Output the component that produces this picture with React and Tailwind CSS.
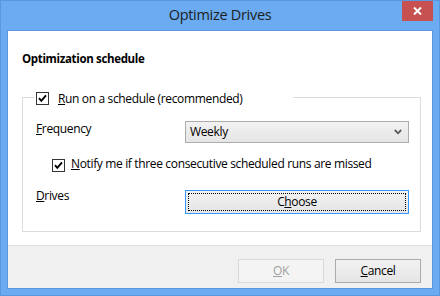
export default function App() {
  const Check = () => (
    <div className="w-[13px] h-[13px] border border-[#333333] bg-white flex items-center justify-center shrink-0">
      <svg width="11" height="11" viewBox="0 0 11 11">
        <path d="M2 5.2 L4.3 7.8 L9 2.4" fill="none" stroke="#000" strokeWidth="1.9" />
      </svg>
    </div>
  );
  return (
    <div className="w-[440px] h-[296px] bg-[#6aabf2] border border-[#5a97df] flex flex-col px-[6px] pb-[6px] font-['Open_Sans',sans-serif] text-[12px] leading-[16px] text-black tracking-[-0.35px]">
      <div className="relative h-[29px] shrink-0 flex items-center justify-center">
        <span className="text-[14.5px] leading-[20px] text-[#1e1e1e] tracking-[-0.3px] -mt-[1px]">Optimize Drives</span>
        <div className="absolute top-0 right-0 w-[31px] h-[20px] bg-[#c75050] flex items-center justify-center">
          <svg width="9" height="8" viewBox="0 0 9 8">
            <path d="M1 0.5 L8 7.5 M8 0.5 L1 7.5" stroke="#fff" strokeWidth="2" fill="none" />
          </svg>
        </div>
      </div>
      <div className="flex-1 border border-[#5a97df] bg-white flex flex-col">
        <div className="flex-1 pl-[14px] pr-[11px] pt-[20px] flex flex-col">
          <div className="font-bold text-[11.5px] tracking-[-0.34px]">Optimization schedule</div>
          <div className="mt-[30px] border border-[#dcdcdc] pl-[13px] pr-[11px] pb-[17px] flex flex-col">
            <div className="-mt-[6px] -ml-[1px] pl-[1px] bg-white w-[258px] h-[13px] flex items-center">
              <Check />
              <span className="ml-[9px]"><u>R</u>un on a schedule (recommended)</span>
            </div>
            <div className="mt-[16px] flex items-start">
              <div className="w-[149px]"><u>F</u>requency</div>
              <div className="w-[224px] h-[22px] border border-[#acacac] bg-gradient-to-b from-[#f2f2f2] to-[#e5e5e5] flex items-center justify-between pl-[4px] pr-[6px]">
                <span>Weekly</span>
                <svg width="8" height="6" viewBox="0 0 8 6">
                  <path d="M0.8 1 L4 4.3 L7.2 1" fill="none" stroke="#5a5a5a" strokeWidth="1.8" />
                </svg>
              </div>
            </div>
            <div className="mt-[13px] pl-[16px] flex items-start">
              <div className="mt-[3px]"><Check /></div>
              <span className="ml-[6px]"><u>N</u>otify me if three consecutive scheduled runs are missed</span>
            </div>
            <div className="mt-[16px] flex items-start">
              <div className="w-[149px]"><u>D</u>rives</div>
              <div className="mt-[2px] w-[224px] h-[24px] border border-[#3399ff] bg-gradient-to-b from-[#f2f2f2] to-[#e5e5e5] p-[2px]">
                <div className="w-full h-full border border-dotted border-black flex items-center justify-center">
                  <span>C<u>h</u>oose</span>
                </div>
              </div>
            </div>
          </div>
        </div>
        <div className="h-[43px] shrink-0 border-t border-[#dfdfdf] bg-[#f0f0f0] flex justify-end items-start pt-[13px] pr-[11px] gap-[11px]">
          <div className="w-[86px] h-[24px] border border-[#d9d9d9] bg-[#f4f4f4] text-[#a0a0a0] flex items-center justify-center">
            <span><u>O</u>K</span>
          </div>
          <div className="w-[86px] h-[24px] border border-[#acacac] bg-gradient-to-b from-[#f2f2f2] to-[#e5e5e5] flex items-center justify-center">
            <span><u>C</u>ancel</span>
          </div>
        </div>
      </div>
    </div>
  );
}
